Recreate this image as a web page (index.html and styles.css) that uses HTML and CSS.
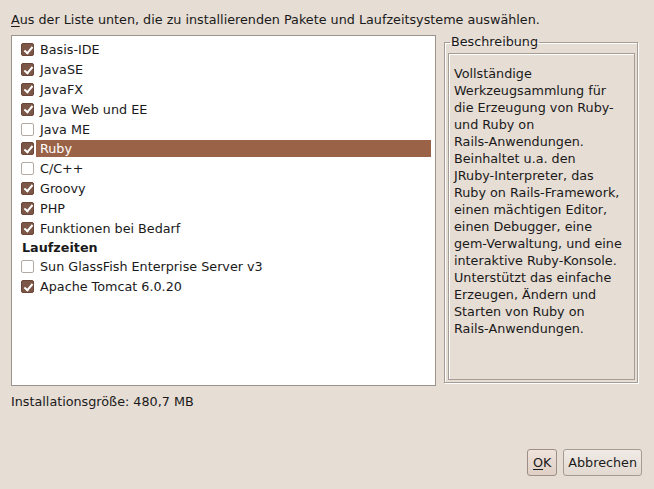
FILE: index.html
```html
<!DOCTYPE html>
<html>
<head>
<meta charset="utf-8">
<link rel="stylesheet" href="styles.css">
</head>
<body>
<div class="dialog">
  <div class="intro"><span class="mn">A</span>us der Liste unten, die zu installierenden Pakete und Laufzeitsysteme auswählen.</div>
  <div class="main">
    <div class="list">
      <div class="row"><span class="cb on"></span><span class="lbl">Basis-IDE</span></div>
      <div class="row"><span class="cb on"></span><span class="lbl">JavaSE</span></div>
      <div class="row"><span class="cb on"></span><span class="lbl">JavaFX</span></div>
      <div class="row"><span class="cb on"></span><span class="lbl">Java Web und EE</span></div>
      <div class="row"><span class="cb"></span><span class="lbl">Java ME</span></div>
      <div class="row sel"><span class="cb on"></span><span class="lbl">Ruby</span></div>
      <div class="row"><span class="cb"></span><span class="lbl">C/C++</span></div>
      <div class="row"><span class="cb on"></span><span class="lbl">Groovy</span></div>
      <div class="row"><span class="cb on"></span><span class="lbl">PHP</span></div>
      <div class="row"><span class="cb on"></span><span class="lbl">Funktionen bei Bedarf</span></div>
      <div class="heading">Laufzeiten</div>
      <div class="row"><span class="cb"></span><span class="lbl">Sun GlassFish Enterprise Server v3</span></div>
      <div class="row"><span class="cb on"></span><span class="lbl">Apache Tomcat 6.0.20</span></div>
    </div>
    <fieldset class="desc">
      <legend>Beschreibung</legend>
      <div class="desc-box">Vollständige<br>Werkzeugsammlung für<br>die Erzeugung von Ruby-<br>und Ruby on<br>Rails-Anwendungen.<br>Beinhaltet u.a. den<br>JRuby-Interpreter, das<br>Ruby on Rails-Framework,<br>einen mächtigen Editor,<br>einen Debugger, eine<br>gem-Verwaltung, und eine<br>interaktive Ruby-Konsole.<br>Unterstützt das einfache<br>Erzeugen, Ändern und<br>Starten von Ruby on<br>Rails-Anwendungen.</div>
    </fieldset>
  </div>
  <div class="size">Installationsgröße: 480,7 MB</div>
  <div class="buttons">
    <button class="btn default"><span class="mn">O</span>K</button>
    <button class="btn">Abbrechen</button>
  </div>
</div>
</body>
</html>
```
FILE: styles.css
```css
html, body {
  margin: 0;
  padding: 0;
  background: #e6ddd4;
}
body {
  font-family: "DejaVu Sans", sans-serif;
  font-size: 12.75px;
  color: #1a1a1a;
  width: 654px;
  height: 489px;
  overflow: hidden;
}
.dialog {
  display: flex;
  flex-direction: column;
  height: 489px;
  box-sizing: border-box;
  padding: 11px 12px 12px 11px;
}
.intro {
  line-height: 16px;
  height: 16px;
  margin-top: 1px;
}
.mn {
  text-decoration: underline;
  text-underline-offset: 2px;
}
.main {
  display: flex;
  align-items: flex-start;
  margin-top: 7px;
  gap: 8px;
}
.list {
  width: 425px;
  height: 351px;
  box-sizing: border-box;
  background: #fff;
  border: 1px solid #9a948c;
  padding: 4px 0 0 9px;
}
.row {
  display: flex;
  align-items: center;
  height: 19.8px;
}
.cb {
  width: 11px;
  height: 11px;
  border: 1px solid #b3aba3;
  border-radius: 2px;
  background: #fff;
  flex: none;
  position: relative;
}
.cb.on {
  background: #7c5646;
  border-color: #6a4638;
}
.cb.on::after {
  content: "";
  position: absolute;
  left: 3.5px;
  top: 0.5px;
  width: 3px;
  height: 7px;
  border: solid #fff;
  border-width: 0 2px 2px 0;
  transform: rotate(40deg);
}
.lbl {
  margin-left: 2px;
  padding-left: 4px;
  line-height: 17px;
  height: 17px;
  flex: 1;
  margin-right: 4px;
}
.sel .lbl {
  background: #9a6348;
  color: #fff;
}
.heading {
  font-weight: bold;
  height: 18px;
  line-height: 18px;
  margin-left: 1px;
  margin-top: 1px;
}
.desc {
  margin: 0;
  padding: 0 2px 2px 3px;
  width: 194px;
  height: 348px;
  box-sizing: border-box;
  border: 1px solid #a59d95;
  box-shadow: 1px 1px 0 #fff inset, 1px 1px 0 #fff;
}
.desc legend {
  padding: 0 1px;
  margin-left: 2px;
  line-height: 14px;
}
.desc-box {
  height: 327px;
  box-sizing: border-box;
  border: 1px solid #a59d95;
  box-shadow: 1px 1px 0 #fff inset;
  padding: 11px 4px 0 5px;
  line-height: 17px;
  margin-top: 4px;
  white-space: nowrap;
}
.size {
  margin-top: 8px;
  line-height: 16px;
}
.buttons {
  margin-top: auto;
  display: flex;
  justify-content: flex-end;
  gap: 6px;
  margin-bottom: 1px;
}
.btn {
  font-family: "DejaVu Sans", sans-serif;
  font-size: 12.75px;
  color: #1a1a1a;
  height: 27px;
  padding: 0 4px;
  border: 1px solid #a49c93;
  border-radius: 3px;
  background: linear-gradient(#f0ebe6, #e2d9d0);
}
.btn.default {
  background: linear-gradient(#efe3dc, #dfcfc5);
  border-color: #9d8f86;
  width: 30px;
}
```
